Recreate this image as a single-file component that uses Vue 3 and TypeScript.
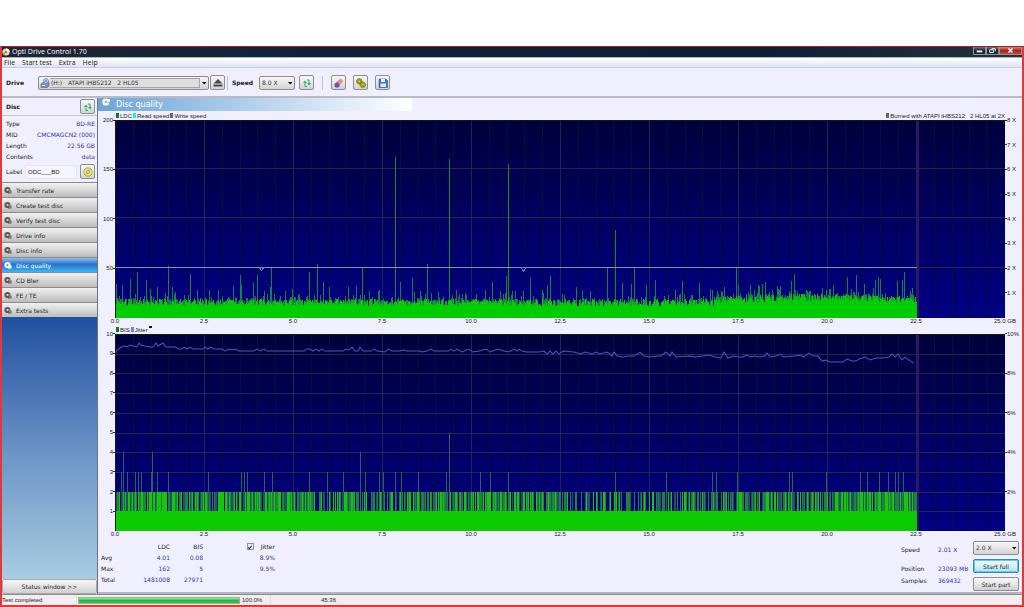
<script setup lang="ts">
import { ref } from 'vue'

const PLOT_W = 890
const PLOT_H = 197
const DATA_W = 802

const menus = ['File', 'Start test', 'Extra', 'Help']
const tests = [
  'Transfer rate', 'Create test disc', 'Verify test disc', 'Drive info', 'Disc info',
  'Disc quality', 'CD Bler', 'FE / TE', 'Extra tests',
]
const activeTest = ref('Disc quality')
const drive = ref('h')
const readSpeed = ref('8.0 X')
const testSpeed = ref('2.0 X')
const discLabel = ref('ODC___BD')
const showJitter = ref(true)

const discInfo = [
  ['Type', 'BD-RE'],
  ['MID', 'CMCMAGCN2 (000)'],
  ['Length', '22.56 GB'],
  ['Contents', 'data'],
]
const summary = [
  ['Avg', '4.01', '0.08', '8.9%'],
  ['Max', '162', '5', '9.5%'],
  ['Total', '1481008', '27971', ''],
]
const position = [
  ['Speed', '2.01 X'],
  ['Position', '23093 MB'],
  ['Samples', '369432'],
]

const xLabels = ['0.0', '2.5', '5.0', '7.5', '10.0', '12.5', '15.0', '17.5', '20.0', '22.5', '25.0 GB']
const ldcLabels = ['200', '150', '100', '50', '']
const speedLabels = ['8 X', '7 X', '6 X', '5 X', '4 X', '3 X', '2 X', '1 X', '']
const bisLabels = ['10', '9', '8', '7', '6', '5', '4', '3', '2', '1', '']
const jitterLabels = ['10%', '8%', '6%', '4%', '2%', '']

const minorX = Array.from({ length: 49 }, (_, i) => Math.round((i + 1) * 17.8)).filter((_, i) => (i + 1) % 5 !== 0)
const majorX = Array.from({ length: 9 }, (_, i) => (i + 1) * 89)
const ldcGridY = [49, 98, 148]
const bisGridY = Array.from({ length: 9 }, (_, i) => Math.round((i + 1) * 19.7))

function makeRandom(seed: number): () => number {
  let s = seed
  return () => {
    s = (s * 1664525 + 1013904223) % 4294967296
    return s / 4294967296
  }
}

const column = (x: number, h: number): string => `M${x} ${PLOT_H}h1v${-h}h-1z`

/* LDC peaks: [column, errors] */
const peaks: [number, number][] = [
  [1, 33], [7, 32], [15, 38], [22, 45], [31, 37], [35, 28], [42, 30], [53, 51], [57, 30], [75, 43], [82, 27],
  [94, 27], [103, 27], [118, 31], [126, 32], [138, 34], [142, 42], [149, 26], [155, 30], [156, 50], [177, 28],
  [194, 45], [208, 35], [214, 30], [233, 30], [241, 31], [264, 27], [285, 35], [297, 39], [305, 26],
  [323, 25], [341, 27], [370, 27], [377, 35], [385, 26], [391, 41], [397, 26], [408, 26], [415, 39],
  [427, 27], [432, 32], [449, 22], [461, 30], [467, 27], [475, 26], [492, 50], [507, 34], [516, 33], [519, 50],
  [531, 32], [540, 37], [560, 27], [577, 22], [584, 34], [595, 28], [597, 27], [609, 30], [623, 32], [635, 32],
  [643, 32], [647, 33], [650, 35], [657, 27], [665, 31], [676, 36], [679, 43], [692, 26], [718, 32], [732, 40],
  [741, 42], [749, 33], [760, 37], [763, 40], [765, 38], [782, 36], [787, 37], [789, 45], [797, 29],
]
const brightPeaks: [number, number][] = [
  [125, 43], [202, 54], [247, 50], [280, 162], [312, 54], [334, 160], [393, 155], [435, 42], [500, 88],
  [567, 37], [621, 51],
]

const ldcRandom = makeRandom(71)
let ldcSolid = ''
let ldcThin = ''
for (let x = 0; x < DATA_W; x++) {
  const lift = x > 600 ? 2 + 3 * Math.sin((x - 600) / 65) : 0
  ldcSolid += column(x, Math.round(11 + lift + ldcRandom() * 7))
  const r = ldcRandom()
  if (r > 0.3) ldcThin += column(x, Math.round(15 + lift + r * r * 13 * ldcRandom()))
}
peaks.forEach(([x, h]) => { ldcThin += column(x, h) })
const ldcBright = brightPeaks.map(([x, h]) => column(x, Math.round(h * 0.985))).join('')

/* BIS columns in three strengths */
const bisRandom = makeRandom(2024)
const bisPaths = { full: '', mid: '', dim: '' }
function density(x: number): number {
  if (x < 63) return 0.95
  if (x < 200) return 0.85
  if (x < 330) return 0.75
  if (x < 440) return 0.75
  if (x < 610) return 0.55
  if (x < 710) return 0.75
  return 0.93
}
for (let x = 0; x < DATA_W; x++) {
  const d = density(x)
  const r = bisRandom()
  if (r < d * d * 0.5) bisPaths.full += column(x, 39)
  else if (r < d * 0.75) bisPaths.mid += column(x, 39)
  else if (r < d) bisPaths.dim += column(x, 39)
}
const threes = [
  6, 12, 20, 23, 26, 36, 42, 53, 93, 126, 129, 132, 149, 157, 194, 212, 228, 250, 264, 268, 280, 286, 303,
  331, 365, 375, 393, 500, 551, 597, 601, 622, 674, 677, 711, 745, 752, 764, 773, 780, 783, 788,
]
const bisHigh = threes.map((x) => column(x, 59)).join('')
  + [8, 37, 245].map((x) => column(x, 79)).join('') + column(334, 98)

/* Jitter curve: [column, row] */
const jitter: [number, number][] = [
  [0, 21], [2, 16], [5, 14], [8, 12], [10, 12], [12, 13], [15, 11], [18, 12], [22, 13], [24, 9], [26, 11], [30, 12],
  [35, 13], [38, 13], [41, 9], [43, 12], [48, 9], [51, 13], [60, 13], [64, 15], [67, 15], [69, 13], [72, 15], [75, 13],
  [78, 15], [88, 15], [90, 13], [93, 15], [96, 13], [99, 15], [107, 15], [110, 17], [114, 15], [117, 16], [120, 15],
  [124, 17], [138, 17], [142, 15], [145, 17], [149, 15], [152, 17], [189, 17], [192, 15], [195, 15], [198, 17],
  [201, 15], [204, 17], [207, 15], [210, 17], [228, 17], [231, 15], [234, 16], [237, 13], [240, 17], [243, 17],
  [245, 13], [248, 17], [256, 17], [259, 15], [262, 17], [270, 18], [273, 15], [277, 17], [285, 17], [288, 16],
  [292, 17], [304, 17], [307, 18], [312, 17], [316, 15], [319, 17], [333, 17], [336, 15], [339, 17], [342, 15],
  [347, 18], [354, 15], [358, 18], [364, 17], [371, 15], [375, 18], [383, 15], [389, 17], [394, 18], [399, 15],
  [402, 17], [404, 15], [407, 17], [412, 18], [424, 18], [429, 17], [432, 20], [435, 17], [438, 20], [441, 17],
  [444, 20], [448, 17], [459, 18], [466, 20], [470, 18], [477, 20], [481, 18], [485, 20], [492, 18], [495, 20],
  [497, 22], [499, 18], [502, 22], [508, 23], [514, 22], [519, 22], [525, 18], [529, 22], [535, 23], [542, 22],
  [546, 22], [551, 18], [555, 22], [557, 18], [561, 23], [575, 22], [580, 23], [588, 22], [594, 21], [600, 23],
  [606, 24], [609, 18], [613, 24], [618, 22], [624, 23], [628, 23], [632, 21], [635, 23], [639, 22], [645, 23],
  [650, 22], [652, 19], [655, 23], [661, 22], [666, 20], [668, 23], [680, 22], [685, 21], [689, 23], [694, 19],
  [698, 22], [703, 22], [707, 27], [711, 26], [715, 28], [728, 28], [732, 25], [737, 27], [741, 27], [744, 25],
  [750, 23], [755, 26], [761, 24], [768, 24], [774, 23], [777, 20], [780, 23], [783, 20], [787, 26], [790, 23],
  [794, 26], [799, 29],
]
const jitterPoints = jitter.map((p) => p.join(',')).join(' ')
</script>

<template>
  <div class="page">
    <div class="window">
      <header class="titlebar">
        <svg class="app-icon" viewBox="0 0 8 8" aria-hidden="true">
          <circle cx="4" cy="4" r="3.6" fill="#e9dca8" />
          <path d="M4 .4A3.6 3.6 0 0 1 7.6 4L4 4z" fill="#fff" />
          <path d="M.6 5.2 3 4.4 2.6 7.4z" fill="#c98b2c" />
          <circle cx="4" cy="4" r="1.1" fill="#6f5a35" />
        </svg>
        <h1>Opti Drive Control 1.70</h1>
        <div class="caption">
          <button aria-label="Minimize"><svg viewBox="0 0 12 7"><path d="M3 3.5h6v2H3z" fill="#fff" /></svg></button>
          <button aria-label="Restore"><svg viewBox="0 0 12 7"><path d="M5 1.5h4v3M3 2.7h4v3H3z" fill="none" stroke="#fff" /></svg></button>
          <button class="close" aria-label="Close"><svg viewBox="0 0 12 7"><path d="M4 1.5l4 4M8 1.5l-4 4" stroke="#fff" stroke-width="1.4" /></svg></button>
        </div>
      </header>

      <nav class="menubar">
        <button v-for="m in menus" :key="m">{{ m }}</button>
      </nav>

      <div class="toolbar">
        <label class="caption-text drive-label" for="drive">Drive</label>
        <div class="combo drive-combo">
          <svg class="drive-icon" viewBox="0 0 10 10" aria-hidden="true">
            <path d="M1 6l3-2h5v4l-2 1.500H1z" fill="#7d92bd" stroke="#42598c" stroke-width=".6" />
            <circle cx="6" cy="3" r="2.500" fill="#b8d1f5" stroke="#4668b0" stroke-width=".6" />
            <circle cx="6" cy="3" r=".8" fill="#3b5da8" />
            <path d="M2 7.500h3" stroke="#fff" stroke-width=".8" />
          </svg>
          <select id="drive" v-model="drive">
            <option value="h">(H:)&nbsp;&nbsp;&nbsp;ATAPI iHBS212&nbsp;&nbsp;&nbsp;2 HL05</option>
          </select>
          <svg class="arrow" viewBox="0 0 8 8" aria-hidden="true"><path d="M2 3h4.500L4.250 5.500z" fill="#111" /></svg>
        </div>
        <button class="tool" aria-label="Eject">
          <svg viewBox="0 0 12 12"><path d="M6 2l4.500 4.500h-9zM1.500 7.500h9v2h-9z" fill="#4a4a4a" /></svg>
        </button>
        <i class="sep"></i>
        <label class="caption-text speed-label" for="speed">Speed</label>
        <div class="combo speed-combo">
          <select id="speed" v-model="readSpeed"><option>8.0 X</option></select>
          <svg class="arrow" viewBox="0 0 8 8" aria-hidden="true"><path d="M2 3h4.500L4.250 5.500z" fill="#111" /></svg>
        </div>
        <button class="tool" aria-label="Refresh speed">
          <svg viewBox="0 0 12 12"><path d="M6 9.500H4V5.500M6 3h2v3.500" stroke="#2fae6c" stroke-width="1" fill="none" /><path d="M2 6l2-2.500L6 6zM6 6l2 2.500L10 6z" fill="#2fae6c" /></svg>
        </button>
        <i class="sep wide"></i>
        <button class="tool" aria-label="Erase disc">
          <svg viewBox="0 0 12 12"><path d="M3.500 5l4-3.500 3 2.500-4 4.500z" fill="#f08a8a" /><circle cx="4" cy="8" r="2.600" fill="#5b50d8" /><path d="M3.500 5l3 3" stroke="#c45c8c" /></svg>
        </button>
        <button class="tool" aria-label="Settings">
          <svg viewBox="0 0 12 12"><circle cx="4.300" cy="4.200" r="2.800" fill="#a09a12" stroke="#6e6a08" stroke-width=".8" stroke-dasharray="1.200 .6" /><circle cx="7.800" cy="7.800" r="2.800" fill="#a09a12" stroke="#6e6a08" stroke-width=".8" stroke-dasharray="1.200 .6" /><circle cx="4.300" cy="4.200" r=".8" fill="#ded980" /><circle cx="7.800" cy="7.800" r=".8" fill="#ded980" /></svg>
        </button>
        <button class="tool" aria-label="Save">
          <svg viewBox="0 0 12 12"><path d="M2 2h7l1.500 1.500V10.500H2z" fill="#3b76d8" stroke="#2456a8" stroke-width=".6" /><path d="M4 2h4v3H4z" fill="#e8f1ff" /><path d="M3.500 6.500h5.500V10H3.500z" fill="#dfeaff" /></svg>
        </button>
      </div>

      <div class="body">
        <aside class="sidebar">
          <div class="disc-head">
            <h2>Disc</h2>
            <button class="tool" aria-label="Refresh disc">
              <svg viewBox="0 0 12 12"><path d="M6 9.500H4V5.500M6 3h2v3.500" stroke="#2fae6c" stroke-width="1" fill="none" /><path d="M2 6l2-2.500L6 6zM6 6l2 2.500L10 6z" fill="#2fae6c" /></svg>
            </button>
          </div>
          <dl class="disc-info">
            <div v-for="[k, v] in discInfo" :key="k"><dt>{{ k }}</dt><dd>{{ v }}</dd></div>
          </dl>
          <div class="label-row">
            <label for="disc-label">Label</label>
            <input id="disc-label" v-model="discLabel" type="text" />
            <button class="tool" aria-label="Read label">
              <svg viewBox="0 0 12 12"><circle cx="6" cy="6" r="4.200" fill="#e8e68c" stroke="#a5a32c" stroke-width=".9" /><circle cx="6" cy="6" r="1.400" fill="#fff" stroke="#8a8824" stroke-width=".8" /><path d="M8 3.200l-1.200 1.600M4 8.800l1.200-1.600" stroke="#8a8824" stroke-width=".8" /></svg>
            </button>
          </div>
          <nav class="tests">
            <button v-for="t in tests" :key="t" :class="{ active: t === activeTest }" @click="activeTest = t">
              <svg viewBox="0 0 8 8" aria-hidden="true">
                <circle cx="3.500" cy="4" r="3.100" class="disc-shape" />
                <circle cx="3.500" cy="4" r="1.100" class="disc-hole" />
                <path d="M4 4.500h3.500v3H4z" class="disc-shape" />
                <path d="M4.500 4h3M5 6h2" class="disc-mark" />
              </svg>
              <span>{{ t }}</span>
            </button>
          </nav>
          <div class="backdrop"></div>
          <button class="status-toggle">Status window &gt;&gt;</button>
        </aside>

        <main class="main">
          <div class="heading">
            <svg viewBox="0 0 8 8" aria-hidden="true">
              <circle cx="3.800" cy="4" r="3.500" fill="#fff" />
              <circle cx="3.800" cy="4" r="1.200" fill="#7fb0dc" />
              <path d="M5 1h3v3H5z" fill="#fff" />
              <path d="M5.500 4.500h2.500" stroke="#7fb0dc" />
            </svg>
            <h2>{{ activeTest }}</h2>
          </div>

          <div class="legend top-legend">
            <span><i class="key ldc"></i>LDC</span>
            <span><i class="key read"></i>Read speed</span>
            <span><i class="key write"></i>Write speed</span>
            <span class="burned"><i class="key write"></i>Burned with ATAPI iHBS212&nbsp;&nbsp; 2 HL05 at 2X</span>
          </div>
          <div class="chart">
            <div class="axis left"><span v-for="(l, i) in ldcLabels" :key="i">{{ l }}</span></div>
            <svg class="plot" :viewBox="`0 0 ${PLOT_W} ${PLOT_H}`" preserveAspectRatio="none" role="img" aria-label="LDC">
              <defs>
                <linearGradient id="night" x1="0" y1="0" x2="0" y2="1">
                  <stop offset="0" stop-color="#00003c" />
                  <stop offset="1" stop-color="#000084" />
                </linearGradient>
              </defs>
              <rect :width="PLOT_W" :height="PLOT_H" fill="url(#night)" />
              <path v-for="x in minorX" :key="'n' + x" :d="`M${x} 0h1v${PLOT_H}h-1z`" class="minor" />
              <path v-for="x in majorX" :key="'m' + x" :d="`M${x} 0h1v${PLOT_H}h-1z`" class="major" />
              <path v-for="y in ldcGridY" :key="'y' + y" :d="`M0 ${y - 1}h${PLOT_W}v1H0z`" class="major" />
              <path :d="ldcThin" fill="#177f48" />
              <path :d="ldcBright" fill="#0f8a34" />
              <path :d="ldcSolid" fill="#00cc00" />
              <path :d="`M0 147h${DATA_W}v1H0z`" fill="#7c98a8" />
              <path d="M144 147h5l-2.500 3zM406 147h5l-2.500 4z" fill="#000070" stroke="#4c8cc0" stroke-width="1" />
              <path :d="`M${DATA_W} 0h2v${PLOT_H}h-2z`" fill="#38106c" />
              <path :d="`M0 0h${PLOT_W}v1H0zM0 0h1v${PLOT_H}H0z`" fill="#16161c" />
            </svg>
            <div class="axis right"><span v-for="(l, i) in speedLabels" :key="i">{{ l }}</span></div>
          </div>
          <div class="x-axis"><span v-for="l in xLabels" :key="l">{{ l }}</span></div>

          <div class="legend">
            <span><i class="key ldc"></i>BIS</span>
            <span><i class="key jit"></i>Jitter</span>
            <span class="blot"></span>
          </div>
          <div class="chart">
            <div class="axis left"><span v-for="(l, i) in bisLabels" :key="i">{{ l }}</span></div>
            <svg class="plot" :viewBox="`0 0 ${PLOT_W} ${PLOT_H}`" preserveAspectRatio="none" role="img" aria-label="BIS and jitter">
              <rect :width="PLOT_W" :height="PLOT_H" fill="url(#night)" />
              <path v-for="x in minorX" :key="'n' + x" :d="`M${x} 0h1v${PLOT_H}h-1z`" class="minor" />
              <path v-for="x in majorX" :key="'m' + x" :d="`M${x} 0h1v${PLOT_H}h-1z`" class="major" />
              <path v-for="y in bisGridY" :key="'y' + y" :d="`M0 ${y}h${PLOT_W}v1H0z`" class="major" />
              <path :d="bisHigh" fill="#285f68" />
              <path :d="bisPaths.dim" fill="#1f5262" />
              <path :d="bisPaths.mid" fill="#228040" />
              <path :d="bisPaths.full" fill="#18c40c" />
              <path :d="`M0 177h${DATA_W}v20H0z`" fill="#0ccb00" />
              <polyline v-if="showJitter" :points="jitterPoints" class="jitter" />
              <path :d="`M${DATA_W} 0h2v${PLOT_H}h-2z`" fill="#38106c" />
              <path :d="`M0 0h${PLOT_W}v1H0zM0 0h1v${PLOT_H}H0z`" fill="#16161c" />
            </svg>
            <div class="axis right"><span v-for="(l, i) in jitterLabels" :key="i">{{ l }}</span></div>
          </div>
          <div class="x-axis"><span v-for="l in xLabels" :key="l">{{ l }}</span></div>

          <div class="results">
            <table>
              <thead>
                <tr>
                  <th class="c-name"></th>
                  <th class="c-ldc">LDC</th>
                  <th class="c-bis">BIS</th>
                  <th class="c-jit"><label class="check"><input v-model="showJitter" type="checkbox" /><span>Jitter</span></label></th>
                </tr>
              </thead>
              <tbody>
                <tr v-for="row in summary" :key="row[0]">
                  <th scope="row">{{ row[0] }}</th>
                  <td v-for="(c, i) in row.slice(1)" :key="i">{{ c }}</td>
                </tr>
              </tbody>
            </table>
            <dl class="position">
              <div v-for="[k, v] in position" :key="k"><dt>{{ k }}</dt><dd>{{ v }}</dd></div>
            </dl>
            <div class="actions">
              <div class="combo">
                <select v-model="testSpeed" aria-label="Test speed"><option>2.0 X</option></select>
                <svg class="arrow" viewBox="0 0 8 8" aria-hidden="true"><path d="M2 3h4.500L4.250 5.500z" fill="#111" /></svg>
              </div>
              <button class="push primary">Start full</button>
              <button class="push">Start part</button>
            </div>
          </div>
        </main>
      </div>

      <footer class="statusbar">
        <span class="state">Test completed</span>
        <progress max="100" value="100" aria-label="Test progress"></progress>
        <span class="percent">100.0%</span>
        <span class="elapsed">45:36</span>
      </footer>
    </div>
  </div>
</template>

<style>
body {
  background: #fff;
}
</style>

<style scoped>
.page {
  box-sizing: border-box;
  height: 100vh;
  padding-top: 46px;
  display: flex;
  flex-direction: column;
  font: 6px/11px "DejaVu Sans", Verdana, sans-serif;
  color: #222;
}
.page *,
.page *::before,
.page *::after {
  box-sizing: border-box;
}
.window {
  flex: 1;
  min-height: 0;
  display: flex;
  flex-direction: column;
  border: 2px solid #e0383c;
  border-top: 1px solid #b01c24;
  background: #f0effd;
}
button,
select,
input {
  font: inherit;
  color: inherit;
  margin: 0;
  padding: 0;
  border: 0;
  background: none;
}
h1,
h2,
dl,
dd {
  margin: 0;
  font-weight: normal;
  font-size: inherit;
}
svg {
  display: block;
}

.titlebar {
  flex: none;
  height: 10px;
  display: flex;
  align-items: center;
  background: linear-gradient(90deg, #1a2834, #0d2438 30%, #0b2134 75%, #24333f);
  color: #fff;
}
.app-icon {
  width: 8px;
  height: 8px;
  margin-right: 2px;
}
.titlebar h1 {
  font: 7px/10px "Open Sans", "Noto Sans", sans-serif;
}
.caption {
  display: flex;
  align-self: flex-start;
  margin-left: auto;
}
.caption button {
  width: 13px;
  height: 8px;
  border: 1px solid #8a949c;
  border-top: 0;
  background: linear-gradient(#6a7680, #1a2834 50%);
}
.caption svg {
  width: 11px;
  height: 7px;
}
.caption .close {
  width: 23px;
  background: linear-gradient(#d08878, #a82818 50%, #c84830);
}
.caption .close svg {
  width: 21px;
}

.menubar {
  flex: none;
  height: 11px;
  display: flex;
  gap: 7px;
  padding-left: 2px;
  border-top: 1px solid #aab4c0;
  border-bottom: 1px solid #c4cede;
  background: linear-gradient(#fff, #dfe3f3);
  font: 7px/9px "Open Sans", "Noto Sans", sans-serif;
}

.toolbar {
  flex: none;
  height: 30px;
  display: flex;
  align-items: center;
  padding: 1px 0 0 4px;
  border-bottom: 2px solid #babac6;
}
.caption-text,
.disc-head h2 {
  font-weight: bold;
}
.drive-label {
  width: 32px;
}
.speed-label {
  width: 27px;
}
.combo {
  height: 14px;
  display: flex;
  align-items: center;
  border: 1px solid #8c8c8c;
  border-radius: 2px;
  background: linear-gradient(#f6f6f6, #e6e6e6 50%, #d2d2d2);
}
.combo select {
  appearance: none;
  flex: 1;
  min-width: 0;
  height: 12px;
  padding-left: 2px;
  color: #333;
  line-height: 12px;
}
.arrow {
  width: 8px;
  height: 8px;
  flex: none;
  pointer-events: none;
}
.drive-combo {
  width: 171px;
  margin-right: 1px;
}
.drive-icon {
  width: 10px;
  height: 10px;
  margin-left: 1px;
}
.drive-combo select {
  height: 10px;
  padding-left: 1px;
  border: 1px solid #a6a6a6;
  border-left: 0;
  background: #dedede;
  line-height: 8px;
}
.speed-combo {
  width: 36px;
  margin-right: 4px;
}
.tool {
  width: 15px;
  height: 15px;
  flex: none;
  display: grid;
  place-items: center;
  border: 1px solid #8e8e8e;
  border-radius: 2px;
  background: linear-gradient(#f6f6f6, #e8e8e8 50%, #d0d0d0);
}
.tool svg {
  width: 12px;
  height: 12px;
}
.toolbar .tool + .tool {
  margin-left: 7px;
}
.sep {
  width: 1px;
  height: 14px;
  margin: 0 4px 0 2px;
  background: #c4c4d0;
}
.sep.wide {
  margin: 0 8px;
}

.body {
  flex: 1;
  min-height: 0;
  display: flex;
}
.sidebar {
  width: 96px;
  flex: none;
  display: flex;
  flex-direction: column;
  border-right: 1px solid #6c7484;
}
.disc-head {
  height: 18px;
  display: flex;
  align-items: center;
  justify-content: space-between;
  padding: 0 2px 0 4px;
  border-bottom: 1px solid #c4c4ce;
}
.disc-info {
  padding: 2px 2px 0 4px;
}
.disc-info div {
  display: flex;
  justify-content: space-between;
}
dd,
td {
  color: #3434b4;
}
.label-row {
  height: 20px;
  display: flex;
  align-items: center;
  padding: 0 2px 1px 4px;
}
.label-row label {
  width: 19px;
}
.label-row input {
  flex: 1;
  min-width: 0;
  height: 14px;
  margin-right: 3px;
  padding: 0 2px;
  border: 1px solid #e4e4f0;
  background: #f6f5ff;
  font-family: "Liberation Sans", Arial, sans-serif;
}
.tests {
  display: flex;
  flex-direction: column;
}
.tests button {
  height: 15px;
  display: flex;
  align-items: center;
  gap: 4px;
  padding-left: 2px;
  border-top: 1px solid #8c8c8c;
  background: linear-gradient(#f0f0f0, #d8d8d8 50%, #bcbcbc);
}
.tests svg {
  width: 8px;
  height: 8px;
}
.disc-shape {
  fill: #585858;
}
.disc-hole {
  fill: #d8d8d8;
}
.disc-mark {
  stroke: #d0d0d0;
  stroke-width: 0.6;
}
.tests .active {
  color: #fff;
  background: linear-gradient(#8cc0ec, #2a72c8 45%, #38b8f4);
}
.active .disc-shape {
  fill: #fff;
}
.active .disc-hole {
  fill: #4a90d8;
}
.backdrop {
  flex: 1;
  background: linear-gradient(#2050a0, #7098c8 55%, #a8cce0);
}
.status-toggle {
  height: 15px;
  border: 1px solid #a8a8a8;
  border-radius: 2px;
  background: linear-gradient(#f4f4f4, #e4e4e4 50%, #cfcfcf);
}

.main {
  flex: 1;
  min-width: 0;
  display: flex;
  flex-direction: column;
}
.heading {
  height: 13px;
  width: 34%;
  display: flex;
  align-items: center;
  gap: 6px;
  padding-left: 4px;
  background: linear-gradient(90deg, #6ca4d6, #b4d2ec 50%, #fff);
  color: #fff;
}
.heading svg {
  width: 8px;
  height: 8px;
  align-self: flex-start;
}
.heading h2 {
  font-size: 8px;
  line-height: 13px;
}
.legend {
  height: 8px;
  display: flex;
  gap: 1px;
  padding: 0 17px 0 18px;
  font: 6px/8px "Liberation Sans", Arial, sans-serif;
}
.legend span {
  display: flex;
  align-items: center;
  white-space: nowrap;
}
.top-legend {
  height: 9px;
}
.burned {
  margin-left: auto;
}
.key {
  width: 3px;
  height: 5px;
  margin-right: 1px;
}
.ldc {
  background: #0c7c14;
}
.read {
  background: #28e4ec;
}
.write {
  background: #686868;
}
.jit {
  background: #7c7ce4;
}
.legend .blot {
  width: 3px;
  height: 2px;
  background: #111;
}
.chart {
  flex: 1;
  min-height: 0;
  display: flex;
  font: 6px/8px "Liberation Sans", Arial, sans-serif;
}
.axis {
  width: 17px;
  flex: none;
  display: flex;
  flex-direction: column;
  justify-content: space-between;
}
.axis span {
  height: 0;
  display: flex;
  align-items: center;
  white-space: nowrap;
}
.left span {
  justify-content: flex-end;
}
.left span:not(:empty)::after,
.right span:not(:empty)::before {
  content: "";
  width: 2px;
  height: 1px;
  background: #333;
}
.plot {
  flex: 1;
  min-width: 0;
  height: 100%;
  shape-rendering: crispEdges;
}
.minor {
  fill: #0c0c3c;
}
.major {
  fill: #20264c;
}
.jitter {
  fill: none;
  stroke: #5454b8;
  stroke-width: 1;
  shape-rendering: auto;
}
.x-axis {
  height: 8px;
  display: flex;
  justify-content: space-between;
  margin: 0 17px;
  font: 6px/6px "Liberation Sans", Arial, sans-serif;
}
.x-axis span {
  width: 0;
  display: flex;
  justify-content: center;
  white-space: nowrap;
}
.results {
  height: 55px;
  flex: none;
  display: flex;
  padding: 2px 3px 0;
  border-bottom: 2px solid #b4b4be;
}
table {
  align-self: flex-start;
  border-spacing: 0;
  table-layout: fixed;
  width: 174px;
}
tr {
  height: 11px;
}
th,
td {
  padding: 0;
  text-align: right;
  font-weight: normal;
  line-height: 11px;
}
th[scope="row"] {
  text-align: left;
}
.c-name {
  width: 30px;
}
.c-ldc {
  width: 39px;
}
.c-bis {
  width: 33px;
}
.check {
  display: flex;
  align-items: center;
  justify-content: flex-end;
  gap: 7px;
}
.check input {
  appearance: none;
  width: 7px;
  height: 7px;
  border: 1px solid #8a94a4;
  background: #e4e8f0;
  display: grid;
  place-items: center;
}
.check input:checked::before {
  content: "";
  width: 2px;
  height: 4px;
  border: solid #223;
  border-width: 0 1px 1px 0;
  transform: rotate(40deg);
}
.position {
  margin-left: auto;
  padding-top: 3px;
}
.position div {
  display: flex;
  line-height: 12px;
}
.position div:first-child {
  margin-bottom: 7px;
}
.position dt {
  width: 37px;
}
.position dd {
  width: 35px;
  white-space: nowrap;
}
.actions {
  width: 46px;
  display: flex;
  flex-direction: column;
  gap: 4px;
}
.push {
  height: 14px;
  border: 1px solid #8e8e8e;
  border-radius: 2px;
  background: linear-gradient(#f6f6f6, #e8e8e8 50%, #d0d0d0);
}
.push.primary {
  border-color: #2c8ab0;
  box-shadow: inset 0 0 0 1px #58d0f4;
  background: linear-gradient(#f0fafe, #d8eef8 50%, #b4e0f4);
}

.statusbar {
  flex: none;
  height: 11px;
  display: flex;
  align-items: center;
  border-top: 1px solid #8c8c98;
  background: #f1edf0;
  font: 6px/10px "Liberation Sans", Arial, sans-serif;
}
.state {
  width: 75px;
  border-right: 1px solid #dcd8dc;
}
.statusbar progress {
  appearance: none;
  width: 162px;
  height: 7px;
  margin: 0 2px 0 1px;
  border: 1px solid #9cb49c;
}
.statusbar progress::-webkit-progress-bar {
  background: #e4e4e4;
}
.statusbar progress::-webkit-progress-value {
  background: linear-gradient(#a4eaac, #1cbc38 50%, #30c84c);
}
.percent {
  width: 29px;
  border-right: 1px solid #dcd8dc;
}
.elapsed {
  width: 65px;
  text-align: right;
}
</style>
